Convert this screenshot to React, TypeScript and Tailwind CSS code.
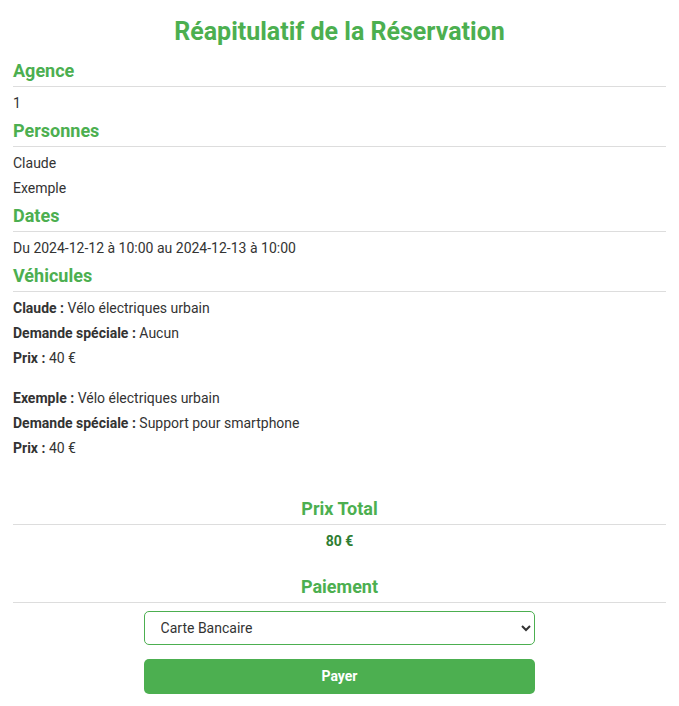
import { useState } from 'react';

const vehicles = [
  { name: 'Claude', type: 'Vélo électriques urbain', special: 'Aucun', price: 40 },
  { name: 'Exemple', type: 'Vélo électriques urbain', special: 'Support pour smartphone', price: 40 },
];

function SectionTitle({ children, center }: { children: React.ReactNode; center?: boolean }) {
  return (
    <h2 className={`text-[18px] leading-[22px] font-bold text-[#4CAF50] pb-[4px] border-b border-[#ddd] mt-[8px] ${center ? 'text-center' : ''}`}>
      {children}
    </h2>
  );
}

export default function App() {
  const [method, setMethod] = useState('carte');
  const total = vehicles.reduce((s, v) => s + v.price, 0);

  return (
    <div className="bg-white min-h-[706px] px-[13px] pt-[16px] text-[14px] text-[#333]" style={{ fontFamily: 'Roboto, "Open Sans", sans-serif' }}>
      <h1 className="text-center text-[25px] leading-[32px] font-bold text-[#4CAF50] mb-[12px]">Réapitulatif de la Réservation</h1>

      <SectionTitle>Agence</SectionTitle>
      <p className="leading-[17px] my-[8px]">1</p>

      <SectionTitle>Personnes</SectionTitle>
      <p className="leading-[17px] my-[8px]">Claude</p>
      <p className="leading-[17px] my-[8px]">Exemple</p>

      <SectionTitle>Dates</SectionTitle>
      <p className="leading-[17px] my-[8px]">Du 2024-12-12 à 10:00 au 2024-12-13 à 10:00</p>

      <SectionTitle>Véhicules</SectionTitle>
      {vehicles.map((v, i) => (
        <div key={i} className="mb-[23px]">
          <p className="leading-[17px] my-[8px]"><strong>{v.name} :</strong> {v.type}</p>
          <p className="leading-[17px] my-[8px]"><strong>Demande spéciale :</strong> {v.special}</p>
          <p className="leading-[17px] my-[8px]"><strong>Prix :</strong> {v.price} €</p>
        </div>
      ))}

      <div className="mt-[41px]">
        <SectionTitle center>Prix Total</SectionTitle>
        <p className="leading-[17px] my-[8px] text-center font-bold text-[#2e7d32]">{total} €</p>
      </div>

      <div className="mt-[26px]">
        <SectionTitle center>Paiement</SectionTitle>
        <div className="flex flex-col items-center gap-[14px] mt-[8px]">
          <select
            value={method}
            onChange={e => setMethod(e.target.value)}
            className="w-[60%] h-[34px] px-[12px] text-[14px] text-[#333] bg-white border border-[#4CAF50] rounded-[5px] outline-none"
            style={{ fontFamily: 'Roboto, "Open Sans", sans-serif' }}
          >
            <option value="carte">Carte Bancaire</option>
            <option value="paypal">PayPal</option>
          </select>
          <button className="w-[60%] h-[35px] bg-[#4CAF50] text-white font-bold text-[14px] rounded-[5px]">Payer</button>
        </div>
      </div>
    </div>
  );
}
